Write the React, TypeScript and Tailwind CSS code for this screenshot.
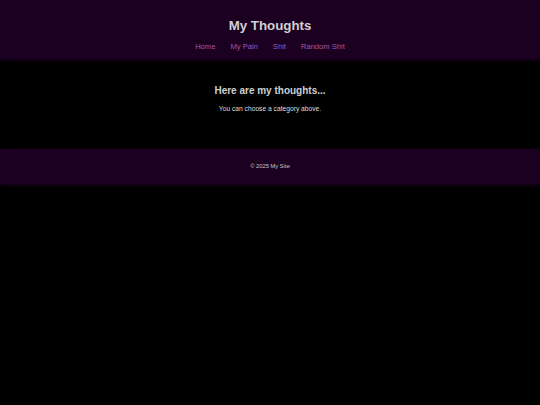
export default function App() {
  const links = ['Home', 'My Pain', 'Shit', 'Random Shit'];

  return (
    <div
      className="min-h-[405px] bg-black text-[#dddddd]"
      style={{ fontFamily: '"Liberation Sans", Arial, sans-serif' }}
    >
      {/* HEADER */}
      <header className="relative z-10 flex h-[59px] flex-col items-center bg-[#1b0022] pt-[17px] shadow-[0_1px_4px_rgba(40,0,50,0.8)]">
        <h1 className="text-[13.3px] font-bold leading-[17px] text-[#d0d0d0]">My Thoughts</h1>
        <nav className="mt-[8px] flex gap-[14px] text-[7.6px] leading-[10px] text-[#9b59b6]">
          {links.map(link => (
            <a key={link} href="#" className="px-[0.5px]">
              {link}
            </a>
          ))}
        </nav>
      </header>

      {/* MAIN */}
      <main className="flex h-[90px] flex-col items-center pt-[25px]">
        <h2 className="text-[10px] font-bold leading-[13px] text-[#d0d0d0]">Here are my thoughts...</h2>
        <p className="mt-[7px] text-[6.7px] leading-[9px] text-[#dddddd]">You can choose a category above.</p>
      </main>

      {/* FOOTER */}
      <footer className="flex h-[35px] items-center justify-center bg-[#1b0022] pb-[1px] shadow-[0_1px_4px_rgba(40,0,50,0.8)]">
        <p className="text-[5.8px] leading-[8px] text-[#c8c8c8]">© 2025 My Site</p>
      </footer>
    </div>
  );
}
